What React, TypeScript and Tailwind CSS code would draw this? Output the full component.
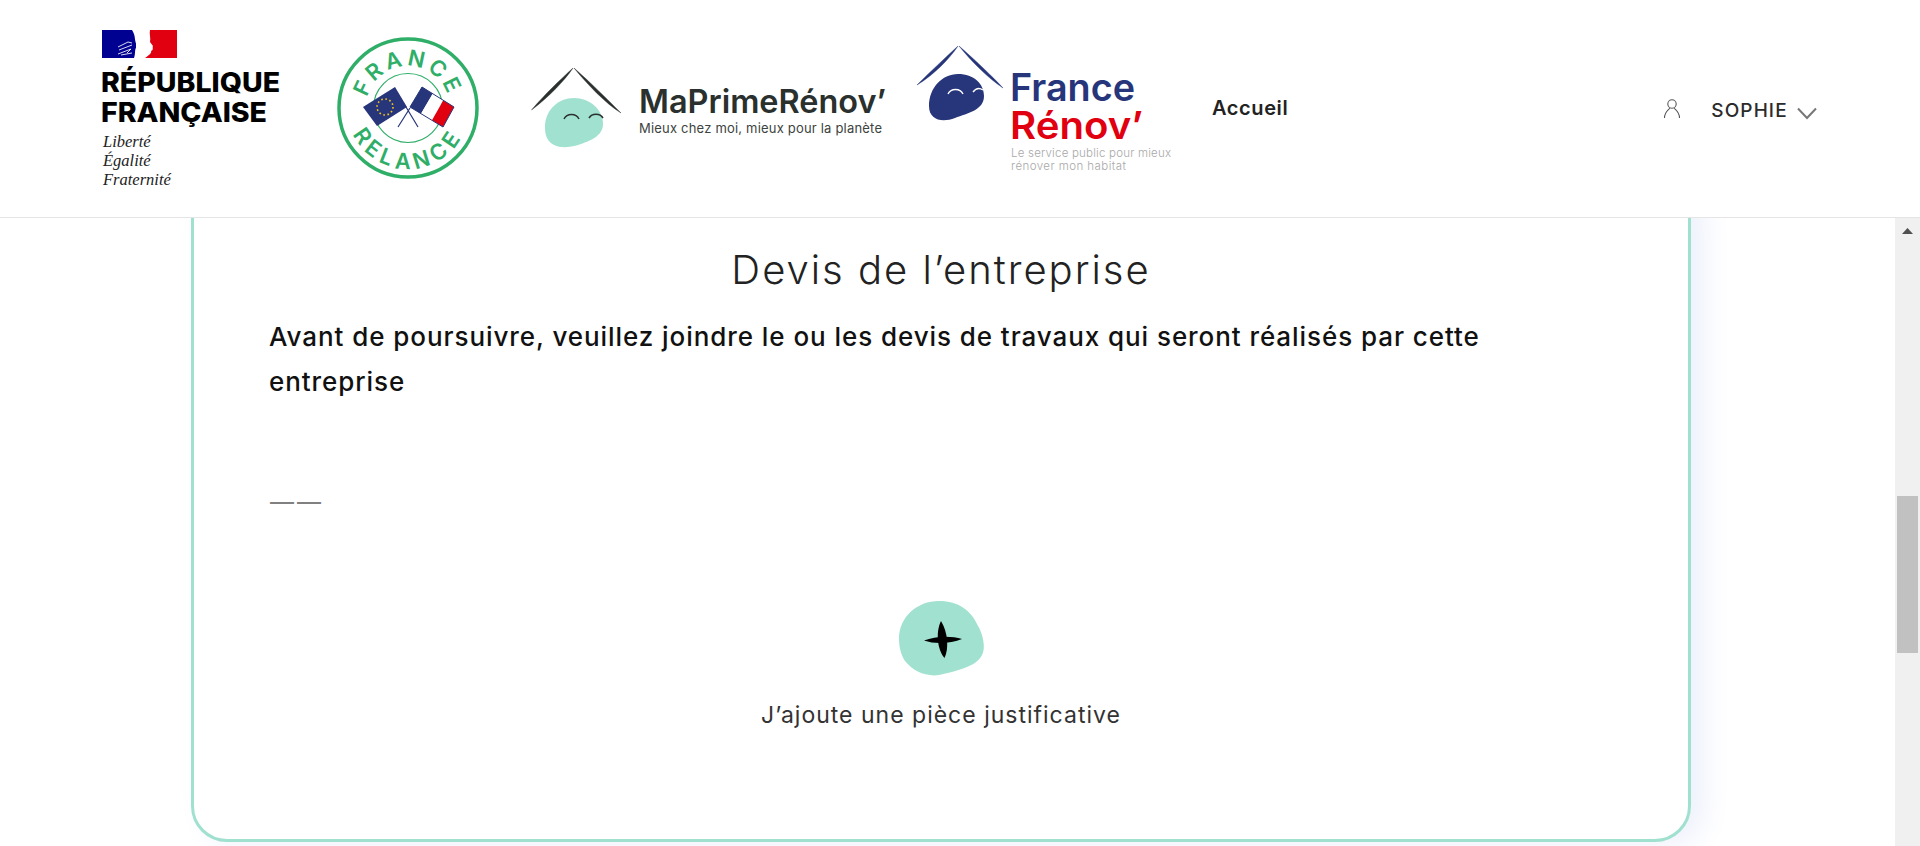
import React from "react";

function Republique() {
  return (
    <svg width="190" height="218" viewBox="100 0 190 218" className="shrink-0">
      <rect x="102" y="30" width="34" height="28" fill="#000091" />
      <rect x="136" y="30" width="41" height="28" fill="#ffffff" />
      <path d="M150 30 H177 V58 H145 C149 55 152 53 151 51 C154 50 152 47 153 46 L150 42 C151 38 149 34 150 30Z" fill="#e1000f" />
      <path d="M132 30 H138 V58 H134 C136 52 134 50 137 46 C134 40 136 36 132 30Z" fill="#ffffff" />
      <path d="M118 47 L128 42 L132 43 M119 50 L132 45 M118 54 L131 49 L127 53 M121 55 L132 53" fill="none" stroke="#ffffff" strokeWidth="1" opacity="0.85" />
      <text x="101" y="92" textLength="179" lengthAdjust="spacingAndGlyphs" fontFamily="Inter, sans-serif" fontWeight="800" fontSize="27" fill="#000000">RÉPUBLIQUE</text>
      <text x="101" y="122" textLength="166" lengthAdjust="spacingAndGlyphs" fontFamily="Inter, sans-serif" fontWeight="800" fontSize="27" fill="#000000">FRANÇAISE</text>
      <g fontFamily="'Liberation Serif', serif" fontStyle="italic" fontSize="16.5" fill="#222222">
        <text x="103" y="147">Liberté</text>
        <text x="103" y="166">Égalité</text>
        <text x="103" y="185">Fraternité</text>
      </g>
    </svg>
  );
}

function Relance() {
  const green = "#2fae68";
  return (
    <svg width="160" height="218" viewBox="330 0 160 218" className="shrink-0 ml-[40px]">
      <circle cx="408" cy="108" r="69" fill="none" stroke={green} strokeWidth="3.5" />
      <circle cx="408" cy="108" r="34.5" fill="none" stroke={green} strokeWidth="1.2" />
      <defs>
        <path id="arcTop" d="M366 108 A42 42 0 0 1 450 108" />
        <path id="arcBottom" d="M347 108 A61 61 0 0 0 469 108" />
      </defs>
      <g fontFamily="Inter, sans-serif" fontWeight="600" fontSize="22" fill={green} textAnchor="middle">
        <text letterSpacing="3.5"><textPath href="#arcTop" startOffset="50%">FRANCE</textPath></text>
        <text letterSpacing="5"><textPath href="#arcBottom" startOffset="50%">RELANCE</textPath></text>
      </g>
      <path d="M406 107 L418 127 M410 108 L398 127" stroke="#27357a" strokeWidth="1.2" />
      <polygon points="363,107 395,87 407,107 377,126" fill="#27357a" />
      <circle cx="385" cy="107" r="8" fill="none" stroke="#f5c518" strokeWidth="1.6" strokeDasharray="1.6 2.6" />
      <polygon points="410,107 422,87 432.7,93.7 421,113.7" fill="#27357a" />
      <polygon points="421,113.7 432.7,93.7 443.3,100.3 432,120.3" fill="#ffffff" />
      <polygon points="432,120.3 443.3,100.3 454,107 443,127" fill="#e1000f" />
      <polygon points="410,107 422,87 454,107 443,127" fill="none" stroke="#27357a" strokeWidth="1" />
    </svg>
  );
}

function MaPrime() {
  return (
    <svg width="370" height="218" viewBox="525 0 370 218" className="shrink-0 ml-[35px]">
      <path d="M531.5 110 C545 94 560 80 573 68 C565 80 550 96 531.5 110Z" fill="#2a302d" stroke="#2a302d" strokeWidth="0.4" />
      <path d="M574 68 C590 82 608 100 621 113 C605 103 588 85 574 68Z" fill="#2a302d" stroke="#2a302d" strokeWidth="0.4" />
      <path d="M545 125 C546 110 558 98 574 98 C590 98 603 110 603 124 C603 136 590 141 578 145 C565 149 552 148 547 138 C545 134 545 130 545 125Z" fill="#a1e1d0" />
      <path d="M564 119 C567 113 576 113 579 119 M589 118 C592 113 600 113 603 118" fill="none" stroke="#2a302d" strokeWidth="1.5" />
      <text x="639" y="113" textLength="247" lengthAdjust="spacingAndGlyphs" fontFamily="Inter, sans-serif" fontWeight="600" fontSize="32" fill="#2a302d">MaPrimeRénov’</text>
      <text x="639" y="133" textLength="243" lengthAdjust="spacing" fontFamily="Inter, sans-serif" fontWeight="400" fontSize="13" fill="#3d4340">Mieux chez moi, mieux pour la planète</text>
    </svg>
  );
}

function FranceRenov() {
  return (
    <svg width="270" height="218" viewBox="910 0 270 218" className="shrink-0 ml-[15px]">
      <path d="M917 85 C930 72 945 58 958 46 C950 58 935 74 917 85Z" fill="#27357a" stroke="#27357a" strokeWidth="0.4" />
      <path d="M959 46 C975 60 992 76 1003 88 C988 78 972 62 959 46Z" fill="#27357a" stroke="#27357a" strokeWidth="0.4" />
      <path d="M929 106 C929 88 942 74 958 74 C974 74 984 84 984 96 C984 110 968 113 955 118 C942 123 929 120 929 106Z" fill="#27357a" />
      <path d="M948 94 C951 88 960 88 963 94 M973 92 C976 88 980 88 983 90" fill="none" stroke="#ffffff" strokeWidth="1.4" />
      <text x="1010" y="101" textLength="125" lengthAdjust="spacingAndGlyphs" fontFamily="Inter, sans-serif" fontWeight="600" fontSize="38" fill="#27357a">France</text>
      <text x="1010" y="139" textLength="133" lengthAdjust="spacingAndGlyphs" fontFamily="Inter, sans-serif" fontWeight="600" fontSize="38" fill="#e1000f">Rénov’</text>
      <g fontFamily="Inter, sans-serif" fontWeight="300" fontSize="11.5" fill="#a8a8a8">
        <text x="1011" y="157" textLength="160" lengthAdjust="spacing">Le service public pour mieux</text>
        <text x="1011" y="170" textLength="115" lengthAdjust="spacing">rénover mon habitat</text>
      </g>
    </svg>
  );
}

function AddBlob() {
  return (
    <svg width="87" height="76" viewBox="897 602 87 76" className="mt-[84px] mx-auto block">
      <path d="M898 640 C898 618 916 602 938 602 C958 602 970 612 976 625 C982 635 985 648 981 656 C975 668 955 672 938 676 C925 678 912 672 904 662 C900 656 898 648 898 640Z" fill="#a1e1d0" />
      <path d="M940 622 C947 633 948 650 943.5 659 C937 652 934 634 940 622Z" fill="#000000" />
      <path d="M923 641.5 C934 637 950 636.5 961 640 C950 644.5 934 645.5 923 641.5Z" fill="#000000" />
    </svg>
  );
}

export default function App() {
  return (
    <div className="h-[846px] w-full overflow-hidden bg-white font-['Inter',sans-serif] flex flex-col">
      <header className="h-[218px] shrink-0 border-b border-[#e5e5e5] flex items-center pl-[100px]">
        <Republique />
        <Relance />
        <MaPrime />
        <FranceRenov />
        <a className="ml-[32px] -mt-[2px] text-[20px] tracking-[0.6px] font-semibold text-[#222222]">Accueil</a>
        <svg width="18" height="22" viewBox="0 0 18 22" className="ml-[375px] shrink-0 mt-[1px]" fill="none" stroke="#55565a" strokeWidth="1.1">
          <circle cx="9" cy="6" r="4.2" />
          <path d="M1.5 20 C1.5 14 5 12.5 7 10 M16.5 20 C16.5 14 13 12.5 11 10" />
        </svg>
        <span className="ml-[30px] mt-[6px] text-[19px] font-medium tracking-[1.1px] text-[#2b2b2b]">SOPHIE</span>
        <svg width="20" height="13" viewBox="0 0 20 13" className="ml-[9px] mt-[10px] shrink-0" fill="none" stroke="#777777" strokeWidth="2">
          <path d="M1 1.5 L10 11 L19 1.5" />
        </svg>
      </header>
      <div className="flex flex-1 min-h-0">
        <main className="flex-1 min-w-0 overflow-hidden">
          <section className="-mt-[40px] ml-[191px] w-[1500px] h-[664px] rounded-[36px] border-[3px] border-[#9fe0cf] bg-white shadow-[14px_4px_30px_#eef1fc] px-[75px] pt-[67px]">
            <h1 className="text-center text-[40px] leading-[44px] font-light tracking-[2px] text-[#222222]">Devis de l’entreprise</h1>
            <p className="mt-[22px] w-[1290px] text-[26px] leading-[45px] font-medium tracking-[0.93px] text-[#111111]">
              Avant de poursuivre, veuillez joindre le ou les devis de travaux qui seront réalisés par cette entreprise
            </p>
            <div className="mt-[83px] ml-[1px] h-[30px] leading-[30px] text-[24px] tracking-[3px] text-[#808080]">——</div>
            <AddBlob />
            <p className="mt-[23px] text-center text-[23px] leading-[30px] tracking-[1px] text-[#333333]">J’ajoute une pièce justificative</p>
          </section>
        </main>
        <aside className="w-[25px] shrink-0 bg-[#f0f0f0] flex flex-col items-center">
          <div className="h-[25px] flex items-center justify-center">
            <svg width="11" height="6" viewBox="0 0 11 6"><path d="M5.5 0 L11 6 H0 Z" fill="#505050" /></svg>
          </div>
          <div className="mt-[253px] w-[21px] h-[157px] bg-[#c1c1c1]" />
        </aside>
      </div>
    </div>
  );
}
